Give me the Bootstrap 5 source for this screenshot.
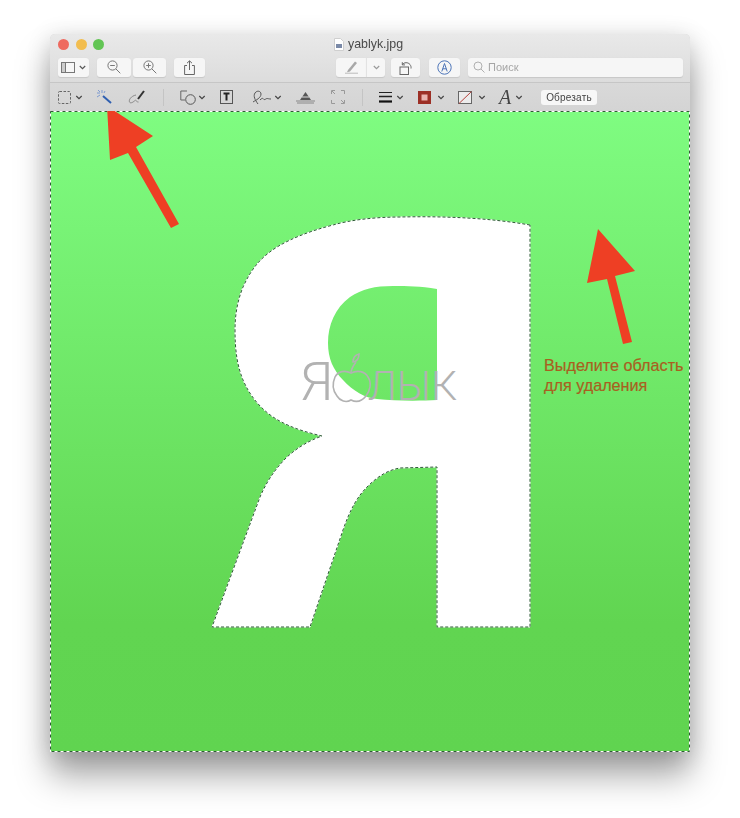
<!DOCTYPE html>
<html lang="ru">
<head>
<meta charset="utf-8">
<title>yablyk.jpg</title>
<link href="https://cdn.jsdelivr.net/npm/bootstrap@5.3.0/dist/css/bootstrap.min.css" rel="stylesheet">
<style>
html,body{background:#fff;margin:0;height:818px;overflow:hidden}
.stage{padding:34px 0 0 50px;font-family:"Liberation Sans",Arial,sans-serif}
.win{width:640px;height:718px;border-radius:5px 5px 0 0;background:#d9d9d9;box-shadow:0 24px 34px rgba(0,0,0,.34),0 4px 24px rgba(0,0,0,.16)}
.head{height:49px;background:linear-gradient(#e9e9e9,#dcdcdc);border-radius:5px 5px 0 0;border-bottom:1px solid #c6c6c6}
.soft{filter:blur(.35px)}
.r1{height:21px;padding-left:8px}
.light{width:11px;height:11px;border-radius:50%;margin-right:6.5px}
.lr{background:#ee6a5f}.ly{background:#f2bd4f}.lg{background:#62c554}
.ttl{position:absolute;left:284px;top:3px;font-size:12.4px;color:#4a4a4a;line-height:14px}
.r2{height:20px;padding-left:8px;margin-top:2px}
.bt{height:19px;background:#f6f6f6;border-radius:3px;box-shadow:0 .5px 1px rgba(0,0,0,.1)}
.w31{width:31px}.w34{width:34px}.w33{width:33px}.w30{width:30px}.w19{width:19px}.w29{width:29px}.search{width:215px;justify-content:flex-start!important;padding-left:5px;font-size:11px;color:#a6a6a6;gap:3px}
.rad-l{border-radius:3px 0 0 3px}.rad-r{border-radius:0 3px 3px 0;border-left:1px solid #e2e2e2}
.r3{height:28px;padding-left:8px;background:linear-gradient(#d9d9d9,#d4d4d4)}
.sep{width:1px;height:17px;background:#c4c4c4}
.crop{width:56px;height:15px;background:#f7f7f7;border-radius:3px;font-size:10px;letter-spacing:.2px;color:#444;line-height:15px;text-align:center}
.ital{width:13px;font-family:"Liberation Serif",serif;font-style:italic;font-size:20px;line-height:20px;color:#444;white-space:nowrap}
.pic{width:640px;height:641px;display:block}
.s1{margin-left:1px}.s2{margin-left:2px}.s3{margin-left:3px}.s4{margin-left:4px}.s6{margin-left:6px}.s8{margin-left:8px}.s9{margin-left:9px}.s13{margin-left:13px}.s14{margin-left:14px}.s16{margin-left:16px}.s17{margin-left:17px}.s18{margin-left:18px}.s131{margin-left:131px}
.logo{font-family:Roboto,"Liberation Sans",sans-serif;font-weight:300;fill:#b2b2b2}
.note{font-family:"Liberation Sans",Arial,sans-serif;font-size:16.2px;fill:#a8601f;stroke:#a8601f;stroke-width:.2px}
</style>
</head>
<body>
<div class="stage">
<div class="win overflow-hidden">
  <div class="head position-relative">
    <div class="soft">
    <div class="r1 d-flex align-items-center">
      <span class="light lr"></span><span class="light ly"></span><span class="light lg"></span>
      <div class="ttl d-flex align-items-center gap-1">
        <svg width="10" height="13" viewBox="0 0 10 13"><path d="M.5.5h6l3 3v9H.5z" fill="#fff" stroke="#cfcfcf"/><rect x="2" y="6" width="6" height="4" fill="#7b8aa8"/></svg>
        <span>yablyk.jpg</span>
      </div>
    </div>
    <div class="r2 d-flex align-items-center">
      <div class="bt w31 d-flex align-items-center justify-content-center gap-1">
        <svg width="14" height="11" viewBox="0 0 14 11"><rect x=".5" y=".5" width="13" height="10" fill="none" stroke="#777"/><rect x=".5" y=".5" width="4" height="10" fill="#ccc" stroke="#777"/></svg>
        <svg width="7" height="5" viewBox="0 0 7 5"><path d="M.8 1l2.700 2.600L6.200 1" fill="none" stroke="#555" stroke-width="1.200"/></svg>
      </div>
      <div class="bt w34 s8 d-flex align-items-center justify-content-center">
        <svg width="14" height="14" viewBox="0 0 14 14"><circle cx="5.500" cy="5.500" r="4.600" fill="none" stroke="#777"/><path d="M3.200 5.500h4.600M9 9l4.300 4.300" stroke="#777" fill="none"/></svg>
      </div>
      <div class="bt w33 s2 d-flex align-items-center justify-content-center">
        <svg width="14" height="14" viewBox="0 0 14 14"><circle cx="5.500" cy="5.500" r="4.600" fill="none" stroke="#777"/><path d="M3.200 5.500h4.600M5.500 3.200v4.600M9 9l4.300 4.300" stroke="#777" fill="none"/></svg>
      </div>
      <div class="bt w31 s8 d-flex align-items-center justify-content-center">
        <svg width="11" height="15" viewBox="0 0 11 15"><path d="M3 5.500H.6v9h9.800v-9H8M5.500 10V1M3 3.200L5.500.8 8 3.200" fill="none" stroke="#666"/></svg>
      </div>
      <div class="bt w30 rad-l s131 d-flex align-items-center justify-content-center">
        <svg width="15" height="14" viewBox="0 0 15 14"><path d="M4 10L11 1.500l2 1.500-7 8.500-3 .8z" fill="#a8a8a8"/><path d="M1 13.200h13" stroke="#bcbcbc"/></svg>
      </div>
      <div class="bt w19 rad-r d-flex align-items-center justify-content-center">
        <svg width="7" height="5" viewBox="0 0 7 5"><path d="M.8 1l2.700 2.600L6.200 1" fill="none" stroke="#999" stroke-width="1.200"/></svg>
      </div>
      <div class="bt w29 s6 d-flex align-items-center justify-content-center">
        <svg width="14" height="15" viewBox="0 0 14 15"><rect x="1" y="7" width="8.500" height="7.500" fill="none" stroke="#666"/><path d="M3.500 4.500C5 2.200 9 2 11 4.500c1 1.300 1.200 2.700 1 4M3.300 2.200v2.700H6" fill="none" stroke="#666"/></svg>
      </div>
      <div class="bt w31 s9 d-flex align-items-center justify-content-center">
        <svg width="15" height="15" viewBox="0 0 15 15"><circle cx="7.500" cy="7.500" r="6.700" fill="none" stroke="#4c74b8"/><path d="M4.800 11.500L7.500 3.500l2.700 8M5.800 8.800h3.400" fill="none" stroke="#4c74b8"/></svg>
      </div>
      <div class="bt search s8 d-flex align-items-center">
        <svg width="12" height="12" viewBox="0 0 12 12"><circle cx="5" cy="5" r="4" fill="none" stroke="#b0b0b0"/><path d="M8 8l3.500 3.500" stroke="#b0b0b0"/></svg>
        <span>Поиск</span>
      </div>
    </div>
    </div>
  </div>
  <div class="r3 d-flex align-items-center">
    <svg class="soft" width="13" height="13" viewBox="0 0 13 13"><rect x=".5" y=".5" width="12" height="12" rx="1" fill="none" stroke="#666" stroke-dasharray="2.500 1.500"/></svg>
    <svg class="s4 soft" width="8" height="5" viewBox="0 0 7 5"><path d="M.8 1l2.700 2.600L6.200 1" fill="none" stroke="#444" stroke-width="1.200"/></svg>
    <svg class="s13 soft" width="16" height="16" viewBox="0 0 16 16"><path d="M7 7l8 7" stroke="#2f5fb0" stroke-width="2"/><path d="M1 4h3M6 1v3M2 1l2 2M9 2L8 4M1 8l3-2" stroke="#7d9ad0"/></svg>
    <svg class="s16 soft" width="18" height="14" viewBox="0 0 18 14"><path d="M10 9L16 1" stroke="#333" stroke-width="2"/><path d="M8 5C3 6 .5 10 1.500 12c1 2 4 0 6-2 1 1 1 2 3 2" fill="none" stroke="#888"/></svg>
    <span class="sep s17"></span>
    <svg class="s16 soft" width="17" height="15" viewBox="0 0 17 15"><path d="M7 1H.8v9H5" fill="none" stroke="#666"/><circle cx="10.500" cy="9.500" r="4.800" fill="none" stroke="#555"/></svg>
    <svg class="s1 soft" width="8" height="5" viewBox="0 0 7 5"><path d="M.8 1l2.700 2.600L6.200 1" fill="none" stroke="#444" stroke-width="1.200"/></svg>
    <svg class="s13 soft" width="15" height="14" viewBox="0 0 15 14"><rect x="1.500" y=".5" width="12" height="13" fill="none" stroke="#555"/><path d="M4.500 3.500h6M7.500 3.500v7" stroke="#222" stroke-width="2"/></svg>
    <svg class="s18 soft" width="20" height="15" viewBox="0 0 20 15"><path d="M6 14C3 10 1 6 3 3c2-3 6-2 6 1 0 4-5 6-8 8M8 10c3-3 3-1 4-.5s2-1 3-1 2 .500 4 .500" fill="none" stroke="#555"/></svg>
    <svg class="s2 soft" width="8" height="5" viewBox="0 0 7 5"><path d="M.8 1l2.700 2.600L6.200 1" fill="none" stroke="#444" stroke-width="1.200"/></svg>
    <svg class="s14 soft" width="19" height="13" viewBox="0 0 19 13"><path d="M9.500 1L15 9H4z" fill="#555"/><path d="M0 10h19M1 12h17" stroke="#888"/><path d="M6 6h7" stroke="#ddd"/></svg>
    <svg class="s16 soft" width="14" height="14" viewBox="0 0 14 14"><path d="M4 .5H.5V4M10 .5h3.500V4M.5 10v3.500H4M13.500 10v3.500H10M1 1l3 3M13 13l-3-3" fill="none" stroke="#999"/></svg>
    <span class="sep s17"></span>
    <svg class="s16 soft" width="13" height="11" viewBox="0 0 13 11"><path d="M0 .5h13" stroke="#222"/><path d="M0 4.500h13" stroke="#222" stroke-width="1.500"/><path d="M0 9.500h13" stroke="#111" stroke-width="2.200"/></svg>
    <svg class="s4 soft" width="8" height="5" viewBox="0 0 7 5"><path d="M.8 1l2.700 2.600L6.200 1" fill="none" stroke="#444" stroke-width="1.200"/></svg>
    <svg class="s14 soft" width="13" height="13" viewBox="0 0 13 13"><rect width="13" height="13" fill="#9c2f25"/><rect x="3.500" y="3.500" width="6" height="6" fill="#e9b3ae"/></svg>
    <svg class="s6 soft" width="8" height="5" viewBox="0 0 7 5"><path d="M.8 1l2.700 2.600L6.200 1" fill="none" stroke="#444" stroke-width="1.200"/></svg>
    <svg class="s13 soft" width="14" height="13" viewBox="0 0 14 13"><rect x=".5" y=".5" width="13" height="12" fill="#ececec" stroke="#666"/><path d="M1 12.500L13.500 .5" stroke="#b5403a"/></svg>
    <svg class="s6 soft" width="8" height="5" viewBox="0 0 7 5"><path d="M.8 1l2.700 2.600L6.200 1" fill="none" stroke="#444" stroke-width="1.200"/></svg>
    <span class="ital s13 soft">A</span>
    <svg class="s3 soft" width="8" height="5" viewBox="0 0 7 5"><path d="M.8 1l2.700 2.600L6.200 1" fill="none" stroke="#444" stroke-width="1.200"/></svg>
    <div class="crop s18 soft">Обрезать</div>
  </div>
  <svg class="pic" viewBox="50 111 640 641" xmlns="http://www.w3.org/2000/svg">
    <defs>
      <linearGradient id="g" x1="0" y1="0" x2="0" y2="1">
        <stop offset="0" stop-color="#7ffc81"/><stop offset=".8" stop-color="#61d551"/><stop offset="1" stop-color="#60d450"/>
      </linearGradient>
      <linearGradient id="g2" gradientUnits="userSpaceOnUse" x1="0" y1="111" x2="0" y2="624">
        <stop offset="0" stop-color="#7ffc81"/><stop offset="1" stop-color="#61d551"/>
      </linearGradient>
      <path id="ya" d="M530 225C490 218 445 216 400 217C375 217 350 220 333 225C310 231 292 238 277 247C258 259 250 272 243 287C237 302 235 316 235 330C235 350 237 365 243 380C250 396 260 408 273 417C288 427 305 432 322 436C308 441 297 448 287 457C274 470 266 483 260 497L212 627H310L343 530C350 510 357 497 367 487C378 476 388 470 400 468L437 467V627H530Z"/>
      <path id="cnt" d="M437 289C420 286 408 286 393 286C375 286 362 289 350 297C335 308 328 325 328 343C328 358 333 370 343 380C353 391 365 398 377 399C395 401 420 401 437 400Z"/>
    </defs>
    <rect x="50" y="111" width="640" height="641" fill="url(#g)"/>
    <use href="#ya" fill="#fff"/>
    <use href="#ya" fill="none" stroke="#fff" stroke-width="1"/>
    <use href="#ya" fill="none" stroke="#2c5a34" stroke-width="1" stroke-dasharray="3 2"/>
    <use href="#cnt" fill="url(#g2)"/>
    <rect x="50.500" y="111.500" width="639" height="640" fill="none" stroke="#fff"/>
    <rect x="50.500" y="111.500" width="639" height="640" fill="none" stroke="#2f5a35" stroke-dasharray="3 3"/>
    <text class="logo" x="300" y="400" font-size="54">Я</text>
    <g fill="none" stroke="#b2b2b2" stroke-width="1.600">
      <path d="M351 373c-6-3-13-2-16 4-3 7-2 14 2 19 3 5 9 7 14 4 6 3 11 1 15-4 4-5 6-13 2-19-3-6-11-7-17-4z"/>
      <path d="M351 373c0-4 2-7 5-11M359 354c-4 1-6 4-6 8 4 0 6-4 6-8z"/>
    </g>
    <text class="logo" x="368" y="400" font-size="41">ЛЫК</text>
    <polygon points="107,106 153,136 136,147 179,224 171,228 128,153 110,160" fill="#ee3f24"/>
    <polygon points="598,229 635,271 615,276 632,342 623,344 607,279 587,283" fill="#ee3f24"/>
    <text class="note" x="544" y="371">Выделите область</text>
    <text class="note" x="544" y="391">для удаления</text>
  </svg>
</div>
</div>
<script src="https://cdn.jsdelivr.net/npm/bootstrap@5.3.0/dist/js/bootstrap.bundle.min.js"></script>
</body>
</html>
